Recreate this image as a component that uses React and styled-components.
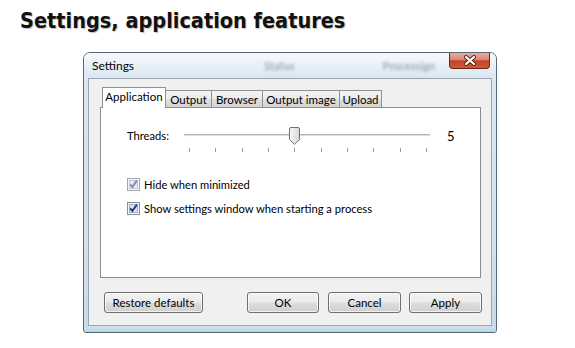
import React from 'react';
import styled, { createGlobalStyle } from 'styled-components';

const Global = createGlobalStyle`
  html, body { margin: 0; padding: 0; background: #ffffff; }
  body {
    width: 575px; height: 348px; overflow: hidden;
    font-family: "Lato", "Liberation Sans", sans-serif;
  }
`;

const Page = styled.div`
  display: flex;
  flex-direction: column;
  padding: 8px 0 0 20px;
  box-sizing: border-box;
  height: 348px;
`;

const Heading = styled.h1`
  margin: 0;
  font-family: "DejaVu Sans Condensed", "DejaVu Sans", sans-serif;
  font-weight: bold;
  font-size: 21.5px;
  line-height: 26px;
  color: #111;
  text-shadow: 1px 1px 1px rgba(0, 0, 0, 0.25);
`;

const Window = styled.div`
  margin: 18px 0 0 63px;
  width: 414px;
  height: 281px;
  box-sizing: border-box;
  border: 1px solid #56677a;
  border-radius: 7px 7px 3px 3px;
  background: linear-gradient(to bottom, #eef4f9 0%, #dbe6ef 12%, #d4e0ea 70%, #c7dbe8 100%);
  display: flex;
  flex-direction: column;
  overflow: hidden;
  font-size: 11.2px;
  color: #000;
`;

const TitleBar = styled.div`
  height: 25px;
  display: flex;
  align-items: center;
  padding-left: 8px;
  background: linear-gradient(to bottom, #f7fafc 0%, #e7eff6 55%, #dbe6ef 100%);
`;

const Title = styled.span`
  font-size: 12px;
  color: #000;
`;

const Ghost = styled.span`
  margin-left: ${p => p.$gap}px;
  font-size: 11px;
  font-weight: bold;
  color: #6f7d8a;
  opacity: 0.6;
  filter: blur(1.4px);
`;

const CloseButton = styled.div`
  align-self: flex-start;
  margin-left: auto;
  margin-right: 6px;
  width: 41px;
  height: 16px;
  box-sizing: border-box;
  border: 1px solid #6b2618;
  border-top: none;
  border-radius: 0 0 4px 4px;
  background: linear-gradient(to bottom, #e8ab9c 0%, #d98874 45%, #c0432a 52%, #cf5a36 100%);
  display: flex;
  align-items: center;
  justify-content: center;
`;

const Client = styled.div`
  margin: 0 4px;
  height: 248px;
  box-sizing: border-box;
  border: 1px solid #98a6b3;
  background: #f0f0f0;
  padding: 8px 10px 0 11px;
  display: flex;
  flex-direction: column;
`;

const TabRow = styled.div`
  display: flex;
  align-items: flex-end;
  height: 20px;
  padding-left: 2px;
`;

const Tab = styled.div`
  position: relative;
  width: ${p => p.$w}px;
  height: ${p => (p.$active ? 21 : 17)}px;
  margin-bottom: ${p => (p.$active ? -1 : 0)}px;
  z-index: ${p => (p.$active ? 2 : 1)};
  box-sizing: border-box;
  border: 1px solid #8e9199;
  border-bottom: none;
  border-left-width: ${p => (p.$first || p.$active ? 1 : 0)}px;
  background: ${p => (p.$active ? '#ffffff' : 'linear-gradient(to bottom, #f3f3f3 0%, #ececec 50%, #e0e0e0 51%, #d4d4d4 100%)')};
  display: flex;
  align-items: center;
  justify-content: center;
  padding-bottom: ${p => (p.$active ? 3 : 0)}px;
  font-size: 11.5px;
  white-space: nowrap;
`;

const Panel = styled.div`
  width: 381px;
  height: 171px;
  box-sizing: border-box;
  border: 1px solid #898c95;
  background: #ffffff;
  padding: 19px 0 0 26px;
  display: flex;
  flex-direction: column;
`;

const SliderRow = styled.div`
  display: flex;
  align-items: flex-start;
  height: 30px;
`;

const SliderLabel = styled.span`
  width: 57px;
  line-height: 18px;
`;

const SliderBox = styled.div`
  position: relative;
  width: 246px;
  height: 30px;
  display: flex;
  flex-direction: column;
`;

const Track = styled.div`
  margin-top: 7px;
  height: 3px;
  box-sizing: border-box;
  border-top: 1px solid #b3b3b3;
  border-bottom: 1px solid #ffffff;
  background: #dcdcdc;
  border-radius: 1px;
`;

const Ticks = styled.div`
  margin-top: 11px;
  display: flex;
  justify-content: space-between;
  padding: 0 3px 0 5px;
`;

const Tick = styled.span`
  width: 1px;
  height: 4px;
  background: #9a9a9a;
`;

const Thumb = styled.div`
  position: absolute;
  top: 0;
  width: 11px;
  height: 18px;
  margin-left: -5px;
`;

const SliderValue = styled.span`
  margin-left: 17px;
  font-size: 13px;
  line-height: 18px;
`;

const CheckList = styled.div`
  margin-top: 21px;
  display: flex;
  flex-direction: column;
  gap: 11px;
`;

const CheckRow = styled.label`
  display: flex;
  align-items: center;
  gap: 4px;
  height: 13px;
  line-height: 13px;
`;

const ButtonRow = styled.div`
  margin: 14px -1px 0 4px;
  display: flex;
  align-items: center;
`;

const Button = styled.button`
  width: ${p => p.$w}px;
  height: 21px;
  margin-left: ${p => (p.$auto ? 'auto' : `${p.$gap || 0}px`)};
  box-sizing: border-box;
  border: 1px solid #707070;
  border-radius: 3px;
  background: linear-gradient(to bottom, #f2f2f2 0%, #ebebeb 48%, #dddddd 52%, #cfcfcf 100%);
  box-shadow: inset 0 0 0 1px rgba(255, 255, 255, 0.7);
  font-family: inherit;
  font-size: 11.5px;
  color: #000;
  padding: 0;
`;

const BottomFrame = styled.div`
  flex: 1;
  margin: 0 -1px -1px;
  background: linear-gradient(to bottom, #d4e0ea 0%, #c3dbe9 60%, #8fd0ea 100%);
`;

const CloseGlyph = () => (
  <svg width="14" height="11" viewBox="0 0 14 11">
    <path d="M3 2 L11 9 M11 2 L3 9" stroke="#5a2015" strokeWidth="4" strokeLinecap="round" />
    <path d="M3 2 L11 9 M11 2 L3 9" stroke="#ffffff" strokeWidth="2.2" strokeLinecap="round" />
  </svg>
);

const ThumbGlyph = () => (
  <svg width="11" height="18" viewBox="0 0 11 18">
    <defs>
      <linearGradient id="thumbFill" x1="0" x2="1" y1="0" y2="0">
        <stop offset="0" stopColor="#fbfbfb" />
        <stop offset="1" stopColor="#d6d6d6" />
      </linearGradient>
    </defs>
    <path
      d="M0.5 2 Q0.5 0.5 2 0.5 H9 Q10.5 0.5 10.5 2 V12.5 L5.5 17.3 L0.5 12.5 Z"
      fill="url(#thumbFill)"
      stroke="#6f6f6f"
    />
  </svg>
);

const CheckBox = ({ muted }) => (
  <svg width="13" height="13" viewBox="0 0 13 13">
    <rect x="0.5" y="0.5" width="12" height="12" fill="#f6f6f6" stroke={muted ? '#a7a7a7' : '#8e8f8f'} />
    <rect x="2.5" y="2.5" width="8" height="8" fill={muted ? '#e8eaf2' : '#d9e4f3'} stroke={muted ? '#c2c7d3' : '#9fb0ca'} />
    <path
      d="M3.2 6.3 L5.4 8.9 L9.9 2.6"
      fill="none"
      stroke={muted ? '#7f8cb8' : '#1f3a8c'}
      strokeWidth="1.9"
    />
  </svg>
);

const tabs = [
  { label: 'Application', w: 64, active: true },
  { label: 'Output', w: 46 },
  { label: 'Browser', w: 51 },
  { label: 'Output image', w: 77 },
  { label: 'Upload', w: 42 },
];

const Slider = ({ value, min, max }) => {
  const count = max - min + 1;
  const left = 5 + ((value - min) / (max - min)) * 237;
  return (
    <SliderBox>
      <Track />
      <Ticks>
        {Array.from({ length: count }, (_, i) => (
          <Tick key={i} />
        ))}
      </Ticks>
      <Thumb style={{ left }}>
        <ThumbGlyph />
      </Thumb>
    </SliderBox>
  );
};

export default function App() {
  return (
    <>
      <Global />
      <Page>
        <Heading>Settings, application features</Heading>
        <Window>
          <TitleBar>
            <Title>Settings</Title>
            <Ghost $gap={130}>Status</Ghost>
            <Ghost $gap={88}>Processign</Ghost>
            <CloseButton>
              <CloseGlyph />
            </CloseButton>
          </TitleBar>
          <Client>
            <TabRow>
              {tabs.map((t, i) => (
                <Tab key={t.label} $w={t.w} $active={t.active} $first={i === 0}>
                  {t.label}
                </Tab>
              ))}
            </TabRow>
            <Panel>
              <SliderRow>
                <SliderLabel>Threads:</SliderLabel>
                <Slider value={5} min={1} max={10} />
                <SliderValue>5</SliderValue>
              </SliderRow>
              <CheckList>
                <CheckRow>
                  <CheckBox muted />
                  Hide when minimized
                </CheckRow>
                <CheckRow>
                  <CheckBox />
                  Show settings window when starting a process
                </CheckRow>
              </CheckList>
            </Panel>
            <ButtonRow>
              <Button $w={99}>Restore defaults</Button>
              <Button $w={72} $auto>OK</Button>
              <Button $w={73} $gap={9}>Cancel</Button>
              <Button $w={73} $gap={8}>Apply</Button>
            </ButtonRow>
          </Client>
          <BottomFrame />
        </Window>
      </Page>
    </>
  );
}
